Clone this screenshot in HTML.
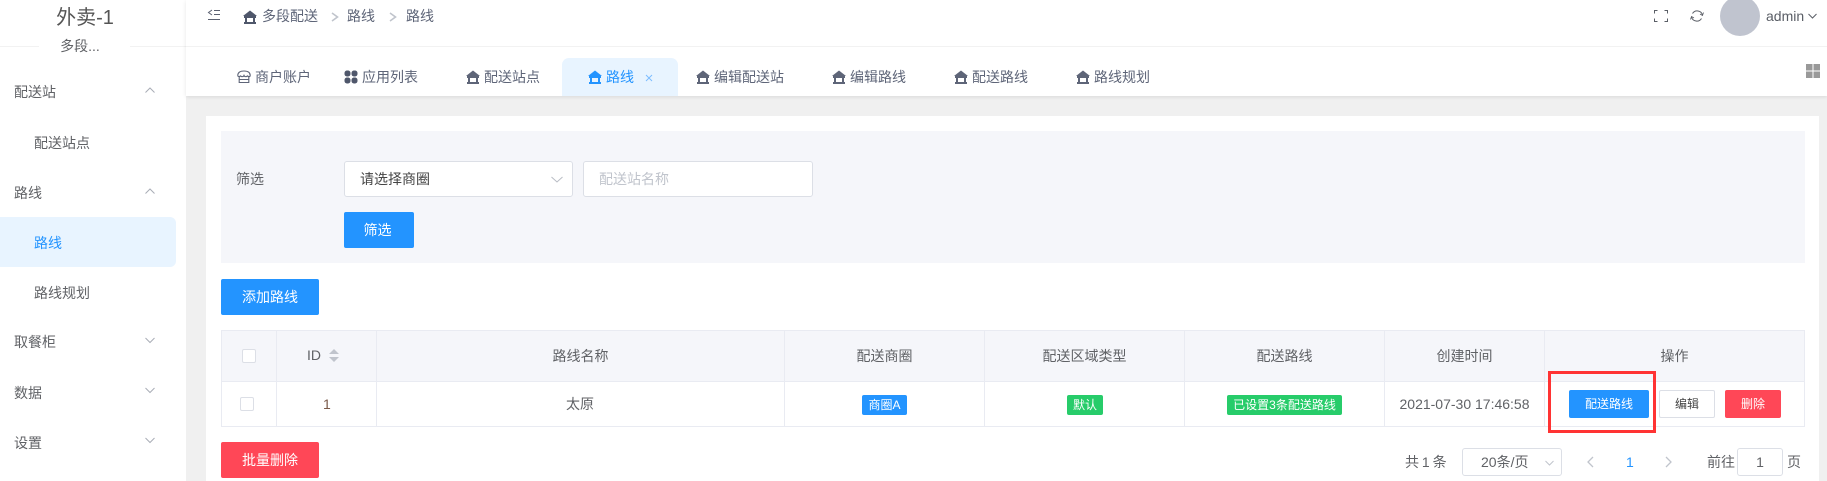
<!DOCTYPE html>
<html lang="zh"><head><meta charset="utf-8"><style>
*{box-sizing:border-box}
html,body{margin:0;padding:0}
body{width:1827px;height:481px;overflow:hidden;background:#f0f0f0;position:relative;font-family:"Liberation Sans","Noto Sans CJK SC",sans-serif;font-size:14px;color:#606266}
.b{position:absolute}
.t{position:absolute;white-space:nowrap;line-height:20px;height:20px}
.c{text-align:center}
.btn{position:absolute;border-radius:2px;color:#fff;text-align:center;white-space:nowrap}
svg{position:absolute;display:block}
.line{background:#e9ebf2;position:absolute}
.tag{position:absolute;height:20px;line-height:20px;border-radius:2px;color:#fff;font-size:12px;text-align:center;white-space:nowrap}
.tab{color:#5e6578}
</style></head><body>
<svg width="0" height="0" style="position:absolute"><defs>
<symbol id="h" viewBox="0 0 14 14"><path d="M7 .5 L14 6 H0 Z" fill="currentColor"/><rect x="1" y="6" width="12" height="2" fill="currentColor"/><rect x="2" y="8" width="2" height="4" fill="currentColor"/><rect x="10" y="8" width="2" height="4" fill="currentColor"/><rect x="1" y="12" width="12" height="2" fill="currentColor"/></symbol>
</defs></svg>

<!-- sidebar -->
<div class="b" style="left:0;top:0;width:186px;height:481px;background:#fff"></div>
<div class="b" style="left:0;top:46px;width:39px;height:1px;background:#f2f2f2"></div>
<div class="b" style="left:130px;top:46px;width:56px;height:1px;background:#f2f2f2"></div>
<div class="t c" style="left:0;width:170px;top:8px;font-size:20px;color:#555;">外卖-1</div>
<div class="t c" style="left:0;width:160px;top:36px;color:#606266">多段...</div>
<div class="t" style="left:14px;top:82px;color:#606266">配送站</div>
<div class="t" style="left:34px;top:133px;color:#606266">配送站点</div>
<div class="t" style="left:14px;top:183px;color:#606266">路线</div>
<div class="b" style="left:0;top:217px;width:176px;height:50px;background:#e8f4ff;border-radius:0 6px 6px 0"></div>
<div class="t" style="left:34px;top:233px;color:#2394ff">路线</div>
<div class="t" style="left:34px;top:283px;color:#606266">路线规划</div>
<div class="t" style="left:14px;top:332px;color:#606266">取餐柜</div>
<div class="t" style="left:14px;top:383px;color:#606266">数据</div>
<div class="t" style="left:14px;top:433px;color:#606266">设置</div>
<svg style="left:145px;top:87px" width="10" height="7"><path d="M.5 5.500 5 1l4.500 4.500" fill="none" stroke="#a9adb6"/></svg>
<svg style="left:145px;top:188px" width="10" height="7"><path d="M.5 5.500 5 1l4.500 4.500" fill="none" stroke="#a9adb6"/></svg>
<svg style="left:145px;top:337px" width="10" height="7"><path d="M.5 1 5 5.500 9.500 1" fill="none" stroke="#a9adb6"/></svg>
<svg style="left:145px;top:387px" width="10" height="7"><path d="M.5 1 5 5.500 9.500 1" fill="none" stroke="#a9adb6"/></svg>
<svg style="left:145px;top:437px" width="10" height="7"><path d="M.5 1 5 5.500 9.500 1" fill="none" stroke="#a9adb6"/></svg>

<!-- header -->
<div class="b" style="left:186px;top:0;width:1641px;height:96px;background:#fff;box-shadow:0 1px 4px rgba(0,0,0,.1)"></div>
<div class="b" style="left:186px;top:46px;width:1641px;height:1px;background:#f2f2f2"></div>
<svg style="left:207px;top:9px;color:#5a6070" width="14" height="13"><path d="M5 1 1.500 3.500 5 6" fill="none" stroke="currentColor"/><path d="M7 1.500h6M7 5.500h6M1 10.500h12" stroke="currentColor" fill="none"/></svg>
<svg style="left:243px;top:10px;color:#4f576b" width="14" height="14"><use href="#h"/></svg>
<div class="t" style="left:262px;top:6px;color:#5e6578">多段配送</div>
<svg style="left:331px;top:12px" width="8" height="10"><path d="M1 1 6.500 5 1 9" fill="none" stroke="#c0c4cc" stroke-width="1.600"/></svg>
<div class="t" style="left:347px;top:6px;color:#5e6578">路线</div>
<svg style="left:389px;top:12px" width="8" height="10"><path d="M1 1 6.500 5 1 9" fill="none" stroke="#c0c4cc" stroke-width="1.600"/></svg>
<div class="t" style="left:406px;top:6px;color:#5e6578">路线</div>

<svg style="left:1654px;top:10px" width="14" height="12"><path d="M.5 3.500v-3h3M10.500 .5h3v3M13.500 8.500v3h-3M3.500 11.500h-3v-3" fill="none" stroke="#5a5e66"/></svg>
<svg style="left:1690px;top:9px" width="14" height="14"><path d="M2.500 4.500A5.500 5.500 0 0 1 12.500 6M11.500 9.500A5.500 5.500 0 0 1 1.500 8" fill="none" stroke="#5a5e66"/><path d="M13.500 3.500 12.500 6.500 10 5M.5 10.500 1.500 7.500 4 9" fill="none" stroke="#5a5e66" stroke-width=".8"/></svg>
<div class="b" style="left:1720px;top:-4px;width:40px;height:40px;border-radius:50%;background:#c0c4cf"></div>
<div class="t" style="left:1766px;top:6px;color:#5a5e66">admin</div>
<svg style="left:1808px;top:13px" width="9" height="6"><path d="M.5 1 4.500 5 8.500 1" fill="none" stroke="#5a5e66"/></svg>

<!-- tabs -->
<div class="b" style="left:562px;top:58px;width:116px;height:38px;background:#e8f4ff;border-radius:7px 7px 0 0"></div>
<svg style="left:237px;top:70px;color:#5e6578" width="14" height="14"><path d="M2.200 6V12.500H11.800V6M2.200 9.500H11.800M.8 5.500C.8 2.500 3 1 7 1S13.200 2.500 13.200 5.500C13.200 7 10.800 7 10.500 5.500 10.200 7 7.600 7 7 5.500 6.400 7 3.800 7 3.500 5.500 3.200 7 .8 7 .8 5.500Z" fill="none" stroke="currentColor" stroke-width="1.100"/></svg>
<div class="t tab" style="left:255px;top:67px">商户账户</div>
<svg style="left:344px;top:70px;color:#4f576b" width="14" height="14"><g fill="currentColor"><rect x="0.500" y="0.500" width="6" height="6" rx="2.500"/><rect x="7.500" y="0.500" width="6" height="6" rx="2.500"/><rect x="0.500" y="7.500" width="6" height="6" rx="2.500"/><rect x="7.500" y="7.500" width="6" height="6" rx="2.500"/></g></svg>
<div class="t tab" style="left:362px;top:67px">应用列表</div>
<svg style="left:466px;top:70px;color:#5e6578" width="14" height="14"><use href="#h"/></svg>
<div class="t tab" style="left:484px;top:67px">配送站点</div>
<svg style="left:588px;top:70px;color:#2394ff" width="14" height="14"><use href="#h"/></svg>
<div class="t" style="left:606px;top:67px;color:#2394ff">路线</div>
<svg style="left:645px;top:74px" width="8" height="8"><path d="M1 1 7 7M7 1 1 7" stroke="#7dbcff" fill="none"/></svg>
<svg style="left:696px;top:70px;color:#5e6578" width="14" height="14"><use href="#h"/></svg>
<div class="t tab" style="left:714px;top:67px">编辑配送站</div>
<svg style="left:832px;top:70px;color:#5e6578" width="14" height="14"><use href="#h"/></svg>
<div class="t tab" style="left:850px;top:67px">编辑路线</div>
<svg style="left:954px;top:70px;color:#5e6578" width="14" height="14"><use href="#h"/></svg>
<div class="t tab" style="left:972px;top:67px">配送路线</div>
<svg style="left:1076px;top:70px;color:#5e6578" width="14" height="14"><use href="#h"/></svg>
<div class="t tab" style="left:1094px;top:67px">路线规划</div>
<svg style="left:1806px;top:64px" width="14" height="14"><g fill="#999"><rect width="6.500" height="6.500"/><rect x="7.500" width="6.500" height="6.500"/><rect y="7.500" width="6.500" height="6.500"/><rect x="7.500" y="7.500" width="6.500" height="6.500"/></g></svg>

<!-- card -->
<div class="b" style="left:206px;top:116px;width:1613px;height:365px;background:#fff"></div>
<div class="b" style="left:221px;top:131px;width:1584px;height:132px;background:#f5f6fa"></div>
<div class="t" style="left:236px;top:169px;color:#606266">筛选</div>
<div class="b" style="left:344px;top:161px;width:229px;height:36px;background:#fff;border:1px solid #dcdfe6;border-radius:3px"></div>
<div class="t" style="left:360px;top:169px;color:#444">请选择商圈</div>
<svg style="left:551px;top:176px" width="12" height="7"><path d="M.5 1 6 6 11.500 1" fill="none" stroke="#b8bcc4"/></svg>
<div class="b" style="left:583px;top:161px;width:230px;height:36px;background:#fff;border:1px solid #dcdfe6;border-radius:3px"></div>
<div class="t" style="left:599px;top:169px;color:#c0c4cc">配送站名称</div>
<div class="btn" style="left:344px;top:212px;width:70px;height:36px;line-height:36px;background:#2394ff;text-indent:-3px">筛选</div>
<div class="btn" style="left:221px;top:279px;width:98px;height:36px;line-height:36px;background:#2394ff">添加路线</div>

<!-- table -->
<div class="b" style="left:221px;top:330px;width:1584px;height:51px;background:#f5f6fa"></div>
<div class="line" style="left:221px;top:330px;width:1584px;height:1px"></div>
<div class="line" style="left:221px;top:381px;width:1584px;height:1px"></div>
<div class="line" style="left:221px;top:426px;width:1584px;height:1px"></div>
<div class="line" style="left:221px;top:330px;width:1px;height:97px"></div>
<div class="line" style="left:276px;top:330px;width:1px;height:97px"></div>
<div class="line" style="left:376px;top:330px;width:1px;height:97px"></div>
<div class="line" style="left:784px;top:330px;width:1px;height:97px"></div>
<div class="line" style="left:984px;top:330px;width:1px;height:97px"></div>
<div class="line" style="left:1184px;top:330px;width:1px;height:97px"></div>
<div class="line" style="left:1384px;top:330px;width:1px;height:97px"></div>
<div class="line" style="left:1544px;top:330px;width:1px;height:97px"></div>
<div class="line" style="left:1804px;top:330px;width:1px;height:97px"></div>
<div class="b" style="left:242px;top:349px;width:14px;height:14px;background:#fff;border:1px solid #dcdfe6;border-radius:2px"></div>
<div class="b" style="left:240px;top:397px;width:14px;height:14px;background:#fff;border:1px solid #dcdfe6;border-radius:2px"></div>
<div class="t" style="left:307px;top:345px;color:#606266">ID</div>
<svg style="left:329px;top:349px" width="10" height="13"><path d="M5 0 10 5H0ZM5 13 0 8H10Z" fill="#c0c4cc"/></svg>
<div class="t c" style="left:377px;width:407px;top:346px">路线名称</div>
<div class="t c" style="left:785px;width:199px;top:346px">配送商圈</div>
<div class="t c" style="left:985px;width:199px;top:346px">配送区域类型</div>
<div class="t c" style="left:1185px;width:199px;top:346px">配送路线</div>
<div class="t c" style="left:1385px;width:159px;top:346px">创建时间</div>
<div class="t c" style="left:1545px;width:259px;top:346px">操作</div>
<div class="t" style="left:323px;top:394px;color:#7a5a4a">1</div>
<div class="t c" style="left:377px;width:406px;top:394px">太原</div>
<div class="tag" style="left:862px;top:395px;width:45px;background:#2394ff">商圈A</div>
<div class="tag" style="left:1067px;top:395px;width:36px;background:#27cc6a">默认</div>
<div class="tag" style="left:1227px;top:395px;width:115px;background:#27cc6a">已设置3条配送路线</div>
<div class="t c" style="left:1385px;width:159px;top:394px">2021-07-30 17:46:58</div>
<div class="btn" style="left:1569px;top:390px;width:80px;height:28px;line-height:28px;font-size:12px;background:#2394ff">配送路线</div>
<div class="btn" style="left:1659px;top:390px;width:56px;height:28px;line-height:26px;font-size:12px;background:#fff;border:1px solid #dcdfe6;color:#444">编辑</div>
<div class="btn" style="left:1725px;top:390px;width:56px;height:28px;line-height:28px;font-size:12px;background:#ff4757">删除</div>
<div class="b" style="left:1548px;top:371px;width:108px;height:62px;border:3px solid #f33"></div>

<!-- footer -->
<div class="btn" style="left:221px;top:442px;width:98px;height:36px;line-height:36px;background:#ff4757">批量删除</div>
<div class="t" style="left:1405px;top:452px;font-size:14px;word-spacing:-1px">共 1 条</div>
<div class="b" style="left:1462px;top:448px;width:100px;height:28px;border:1px solid #dcdfe6;border-radius:3px;background:#fff"></div>
<div class="t" style="left:1481px;top:452px">20条/页</div>
<svg style="left:1545px;top:460px" width="9" height="6"><path d="M.5 1 4.500 5 8.500 1" fill="none" stroke="#c0c4cc"/></svg>
<svg style="left:1587px;top:456px" width="7" height="12"><path d="M6 1 1 6 6 11" fill="none" stroke="#c0c4cc" stroke-width="1.300"/></svg>
<div class="t" style="left:1626px;top:452px;color:#2394ff">1</div>
<svg style="left:1665px;top:456px" width="7" height="12"><path d="M1 1 6 6 1 11" fill="none" stroke="#c0c4cc" stroke-width="1.300"/></svg>
<div class="t" style="left:1707px;top:452px">前往</div>
<div class="b" style="left:1737px;top:448px;width:46px;height:28px;border:1px solid #dcdfe6;border-radius:3px;background:#fff"></div>
<div class="t c" style="left:1737px;width:46px;top:452px">1</div>
<div class="t" style="left:1787px;top:452px">页</div>
</body></html>
